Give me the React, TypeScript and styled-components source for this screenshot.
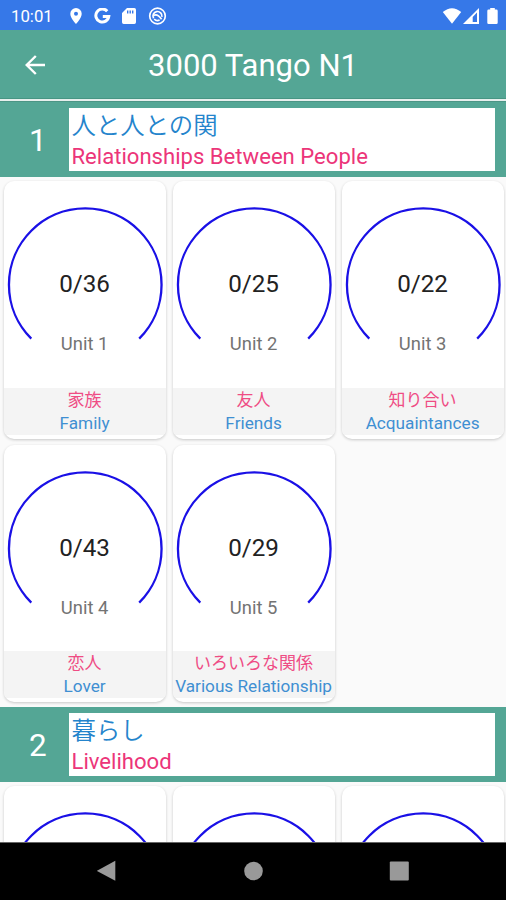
import React from "react";
import styled, { createGlobalStyle } from "styled-components";

const GlobalStyle = createGlobalStyle`
  * { box-sizing: border-box; }
  body { margin: 0; background: #fafafa; }
`;

const Screen = styled.div`
  display: flex;
  flex-direction: column;
  width: 506px;
  height: 900px;
  overflow: hidden;
  background: #fafafa;
  font-family: Roboto, "Noto Sans CJK JP", sans-serif;
`;

const StatusBar = styled.header`
  flex: none;
  display: flex;
  align-items: center;
  justify-content: space-between;
  height: 30px;
  padding: 1px 7px 0 11px;
  background: #3678e8;
  color: #fff;
`;

const StatusGroup = styled.div<{ $gap: number }>`
  display: flex;
  align-items: center;
  gap: ${(p) => p.$gap}px;
  svg { display: block; }
`;

const Clock = styled.span`
  width: 48px;
  font-size: 16.8px;
  line-height: 20px;
`;

const AppBar = styled.div`
  flex: none;
  display: grid;
  grid-template-columns: 70px 1fr 70px;
  align-items: center;
  height: 72px;
  padding-bottom: 1px;
  background: #54a695;
  border-bottom: 1px solid #4b9585;
  box-shadow: inset 0 -2px #e6efed, inset 0 -3px #479583;
`;

const BackButton = styled.button`
  display: flex;
  justify-content: center;
  padding: 0;
  border: 0;
  background: none;
`;

const Title = styled.h1`
  margin: 0;
  padding-top: 2px;
  color: #fff;
  font-size: 31px;
  font-weight: 400;
  line-height: 40px;
  text-align: center;
  white-space: nowrap;
`;

const Content = styled.main`
  flex: 1;
  min-height: 0;
  overflow: hidden;
`;

const SectionHeader = styled.div`
  display: flex;
  align-items: center;
  height: 75px;
  padding: 0 11.5px 1px 0;
  background: #54a695;
`;

const SectionNumber = styled.div`
  width: 68.5px;
  padding: 4px 0 0 7px;
  color: #fff;
  font-size: 31.5px;
  line-height: 40px;
  text-align: center;
`;

const SectionTitle = styled.div`
  flex: 1;
  height: 63px;
  padding-left: 3px;
  background: #fff;
  white-space: nowrap;
`;

const SectionJapanese = styled.div`
  height: 33px;
  padding-top: 1px;
  color: #2484cc;
  font-size: 24.4px;
  font-weight: 350;
  line-height: 33px;
`;

const SectionEnglish = styled.div`
  height: 30px;
  color: #ec3579;
  font-size: 22.1px;
  line-height: 31px;
`;

const CardGrid = styled.div`
  display: grid;
  grid-template-columns: repeat(3, 162px);
  gap: 6px 7px;
  padding: 4px 2px 5px 3.6px;
`;

const Card = styled.article`
  height: 257.5px;
  display: flex;
  flex-direction: column;
  padding-bottom: 4px;
  overflow: hidden;
  border-radius: 10px;
  background: #fff;
  box-shadow: 0 1px 3px rgba(0, 0, 0, 0.2);
`;

const Gauge = styled.div`
  flex: 1;
  display: grid;
  justify-items: center;
  align-content: start;

  > * { grid-area: 1 / 1; }
`;

const Progress = styled.div`
  margin-top: 88.4px;
  color: #222;
  font-size: 24.2px;
  line-height: 30px;
  white-space: nowrap;
`;

const UnitName = styled.div`
  margin-top: 151px;
  color: #737373;
  font-size: 18.4px;
  line-height: 24px;
  white-space: nowrap;
`;

const CardFooter = styled.footer`
  height: 47px;
  background: #f4f4f4;
  text-align: center;
  white-space: nowrap;
`;

const TopicJapanese = styled.div`
  height: 24px;
  color: #ef4c84;
  font-size: 17px;
  line-height: 24px;
`;

const TopicEnglish = styled.div`
  height: 23px;
  color: #3f8fd2;
  font-size: 17.2px;
  line-height: 23px;
`;

const NavBar = styled.nav`
  flex: none;
  display: grid;
  grid-template-columns: repeat(3, 146px);
  justify-content: center;
  justify-items: center;
  align-items: center;
  height: 58px;
  padding-bottom: 1px;
  background: #000;
  border-top: 1px solid #666;
`;

const Arc = () => (
  <svg width="162" height="162" viewBox="0 0 162 162">
    <path
      d="M27.3 157.6A76.3 76.3 0 1 1 135.2 157.6"
      fill="none"
      stroke="#1a10e6"
      strokeWidth="2.3"
    />
  </svg>
);

type Unit = { count: string; name: string; ja: string; en: string };
type Section = { number: number; ja: string; en: string; units: Unit[] };

const sections: Section[] = [
  {
    number: 1,
    ja: "人と人との関",
    en: "Relationships Between People",
    units: [
      { count: "0/36", name: "Unit 1", ja: "家族", en: "Family" },
      { count: "0/25", name: "Unit 2", ja: "友人", en: "Friends" },
      { count: "0/22", name: "Unit 3", ja: "知り合い", en: "Acquaintances" },
      { count: "0/43", name: "Unit 4", ja: "恋人", en: "Lover" },
      { count: "0/29", name: "Unit 5", ja: "いろいろな関係", en: "Various Relationship" },
    ],
  },
  {
    number: 2,
    ja: "暮らし",
    en: "Livelihood",
    units: [
      { count: "", name: "", ja: "", en: "" },
      { count: "", name: "", ja: "", en: "" },
      { count: "", name: "", ja: "", en: "" },
    ],
  },
];

export default function App() {
  return (
    <Screen>
      <GlobalStyle />
      <StatusBar>
        <StatusGroup $gap={11}>
          <Clock>10:01</Clock>
          <svg width="12" height="16" viewBox="0 0 12 16">
            <path fill="#fff" fillRule="evenodd" d="M6 0a5.7 5.7 0 0 0-5.7 5.7C.3 10 6 16 6 16s5.7-6 5.7-10.3A5.7 5.7 0 0 0 6 0zm0 3.7a2 2 0 1 1 0 4 2 2 0 0 1 0-4z" />
          </svg>
          <svg width="18" height="16" viewBox="0 0 18 16">
            <path fill="none" stroke="#fff" strokeWidth="3" d="M14.2 3.2A6.5 6.5 0 1 0 15.8 8.4H9.8" />
          </svg>
          <svg width="14" height="16" viewBox="0 0 14 16">
            <path fill="#fff" fillRule="evenodd" d="M5 0h7.3Q14 0 14 1.7v12.6Q14 16 12.3 16H1.7Q0 16 0 14.3V5zM5 2.5v3h1.4v-3zm2.5 0v3h1.4v-3zm2.5 0v3h1.4v-3z" />
          </svg>
          <svg width="20" height="18" viewBox="0 0 20 18">
            <g fill="none" stroke="#fff" strokeWidth="1.7">
              <circle cx="10.5" cy="9" r="7.8" />
              <path d="M6.6 11.3A4.5 4.5 0 1 1 14.9 9.8M7 8.4Q10.5 6.6 14.6 12.3M7.2 12A4.5 4.5 0 0 0 12.6 13" />
            </g>
          </svg>
        </StatusGroup>
        <StatusGroup $gap={1}>
          <svg width="20" height="16" viewBox="0 0 20 16">
            <path fill="#fff" d="M10 15.8L.8 4Q10-3.6 19.2 4z" />
          </svg>
          <svg width="17" height="16" viewBox="0 0 17 16">
            <path fill="#fff" fillRule="evenodd" d="M16 0v16H0zM14 4.6L9.7 9v5H14z" />
            <path fill="#3678e8" d="M10.6 9.2h1.2V14h-1.2z" opacity=".5" />
          </svg>
          <svg width="18" height="16" viewBox="0 0 18 16">
            <path fill="#fff" d="M9.2 0h4.6v1.6h1.6q1.3 0 1.3 1.3v11.8q0 1.3-1.3 1.3H7.6q-1.3 0-1.3-1.3V2.9q0-1.3 1.3-1.3h1.6z" />
          </svg>
        </StatusGroup>
      </StatusBar>

      <AppBar>
        <BackButton aria-label="Back">
          <svg width="20" height="20" viewBox="0 0 20 20">
            <path fill="none" stroke="#fff" strokeWidth="2.4" d="M10.8 1L1.7 10l9.1 9M1.7 10H20" />
          </svg>
        </BackButton>
        <Title>3000 Tango N1</Title>
      </AppBar>

      <Content>
        {sections.map((section) => (
          <section key={section.number}>
            <SectionHeader>
              <SectionNumber>{section.number}</SectionNumber>
              <SectionTitle>
                <SectionJapanese lang="ja">{section.ja}</SectionJapanese>
                <SectionEnglish>{section.en}</SectionEnglish>
              </SectionTitle>
            </SectionHeader>
            <CardGrid>
              {section.units.map((unit, i) => (
                <Card key={i}>
                  <Gauge>
                    <Arc />
                    <Progress>{unit.count}</Progress>
                    <UnitName>{unit.name}</UnitName>
                  </Gauge>
                  <CardFooter>
                    <TopicJapanese lang="ja">{unit.ja}</TopicJapanese>
                    <TopicEnglish>{unit.en}</TopicEnglish>
                  </CardFooter>
                </Card>
              ))}
            </CardGrid>
          </section>
        ))}
      </Content>

      <NavBar>
        <svg width="20" height="22" viewBox="0 0 20 22">
          <path fill="#999" d="M18.3 .8v20L-.2 10.8z" />
        </svg>
        <svg width="20" height="20" viewBox="0 0 20 20">
          <circle cx="10.5" cy="10" r="9.3" fill="#999" />
        </svg>
        <svg width="20" height="20" viewBox="0 0 20 20">
          <rect x=".8" y=".5" width="19" height="19" rx="1" fill="#999" />
        </svg>
      </NavBar>
    </Screen>
  );
}
